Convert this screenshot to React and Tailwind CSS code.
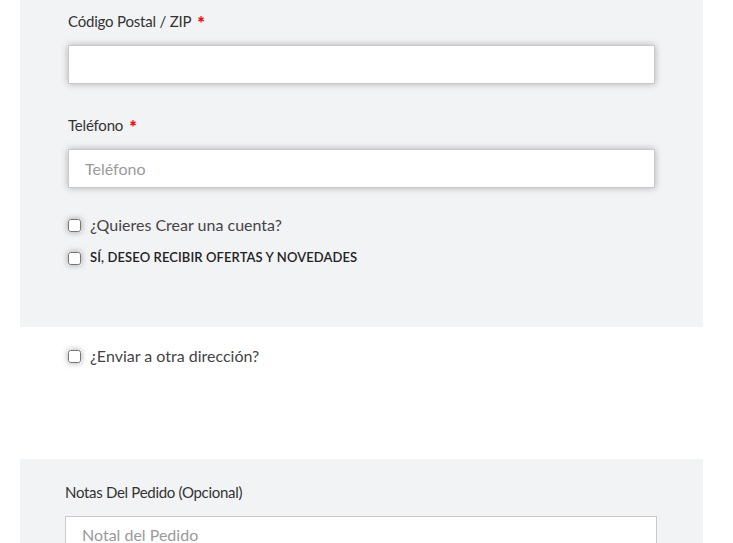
import React from "react";

const font = { fontFamily: "Lato, 'Open Sans', sans-serif" };

function Field({ label, placeholder, first }) {
  return (
    <div className={first ? "" : "mt-[30px]"}>
      <label className="flex items-center text-[15px] leading-[22px] text-[#333]">
        <span className="tracking-[-0.2px]">{label}</span>
        <span className="ml-[6px] text-[#ff0000] font-black text-[18px] leading-none mt-[4px]">*</span>
      </label>
      <input
        type="text"
        placeholder={placeholder}
        className="mt-[13px] block w-full h-[39px] bg-white border border-[#c9c9cc] shadow-[0_0_7px_rgba(0,0,0,0.28)] px-4 text-[16px] text-[#333] placeholder:text-[#9a9a9a] outline-none"
      />
    </div>
  );
}

function Check({ children, className = "", textClass = "" }) {
  return (
    <label className={"flex items-center h-[24px] " + className}>
      <input
        type="checkbox"
        className="w-[13px] h-[13px] m-0 shadow-[0_0_6px_rgba(0,0,0,0.35)] rounded-[3px]"
      />
      <span className={"ml-[9px] " + textClass}>{children}</span>
    </label>
  );
}

export default function App() {
  return (
    <div className="bg-white min-h-[543px] px-[20px] pr-[30px]" style={font}>
      <div className="bg-[#f2f3f5] px-[48px] pt-[10px] pb-[57px]">
        <Field label="Código Postal / ZIP" placeholder="" first />
        <Field label="Teléfono" placeholder="Teléfono" />
        <Check className="mt-[25px]" textClass="text-[16px] text-[#444]">
          ¿Quieres Crear una cuenta?
        </Check>
        <Check className="mt-[9px]" textClass="text-[13px] font-semibold tracking-[0.1px] text-[#222] uppercase">
          Sí, deseo recibir ofertas y novedades
        </Check>
      </div>

      <div className="px-[48px] mt-[17px]">
        <Check textClass="text-[16px] text-[#444]">¿Enviar a otra dirección?</Check>
      </div>

      <div className="mt-[91px] bg-[#f2f3f5] pl-[45px] pr-[46px] pt-[22px] pb-[40px]">
        <label className="block text-[15px] leading-[22px] text-[#333] tracking-[-0.3px]">
          Notas Del Pedido (Opcional)
        </label>
        <textarea
          placeholder="Notal del Pedido"
          className="mt-[13px] block w-full h-[120px] bg-white border border-[#c9c9cc] px-4 pt-[6px] text-[16px] text-[#333] placeholder:text-[#9a9a9a] outline-none resize-none"
        />
      </div>
    </div>
  );
}
